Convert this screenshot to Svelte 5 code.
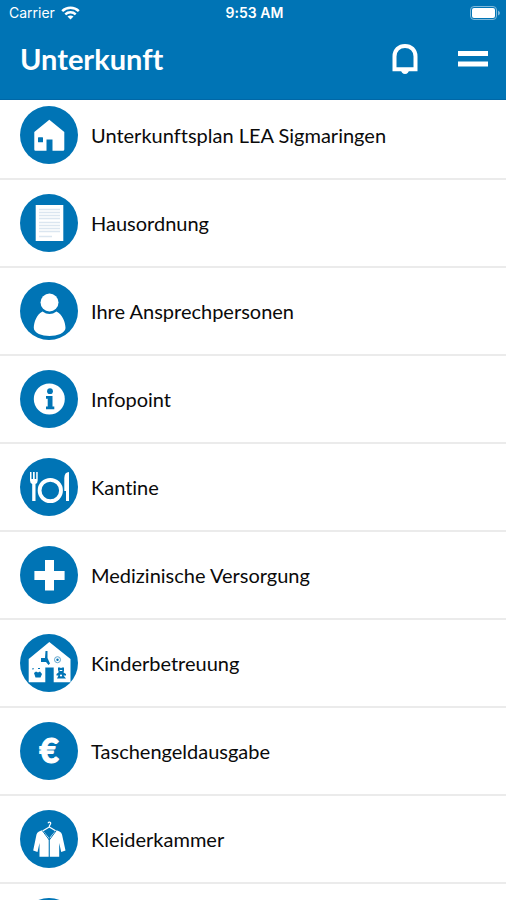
<script lang="ts">
	type Entry = { icon: string; label?: string };

	let entries: Entry[] = [
		{ icon: 'house', label: 'Unterkunftsplan LEA Sigmaringen' },
		{ icon: 'document', label: 'Hausordnung' },
		{ icon: 'person', label: 'Ihre Ansprechpersonen' },
		{ icon: 'info', label: 'Infopoint' },
		{ icon: 'canteen', label: 'Kantine' },
		{ icon: 'cross', label: 'Medizinische Versorgung' },
		{ icon: 'childcare', label: 'Kinderbetreuung' },
		{ icon: 'euro', label: 'Taschengeldausgabe' },
		{ icon: 'jacket', label: 'Kleiderkammer' },
		{ icon: 'blank' }
	];
</script>

<div class="screen">
	<header>
		<div class="status">
			<div class="carrier">
				<span>Carrier</span>
				<svg class="wifi" viewBox="0 0 19 14" aria-hidden="true">
					<path d="M1.2 5.2C5.8.7 13.200.7 17.800 5.200" />
					<path d="M4.300 8.300C7.200 5.600 11.800 5.600 14.700 8.300" />
					<path class="tip" d="M6.500 10.500C8.200 9 10.800 9 12.500 10.500L9.500 13.600Z" />
				</svg>
			</div>
			<span class="time">9:53 AM</span>
			<svg class="battery" viewBox="0 0 30 14" aria-hidden="true">
				<rect class="case" x="0.5" y="0.500" width="26" height="13" rx="3.500" />
				<rect x="2" y="2" width="23" height="10" rx="2" />
				<path class="cap" d="M28 4.500Q30 5.500 30 7Q30 8.500 28 9.500Z" />
			</svg>
		</div>
		<div class="bar">
			<h1>Unterkunft</h1>
			<button aria-label="Mitteilungen">
				<svg class="bell" viewBox="0 0 26 30" aria-hidden="true">
					<path class="outline" d="M2.500 25.300V12.500C2.500 6 7 2 13 2S23.500 6 23.500 12.500V25.300Z" />
					<path d="M8.500 25H17.500Q16.500 30 13 30T8.500 25Z" />
				</svg>
			</button>
			<button aria-label="Menü">
				<svg class="menu" viewBox="0 0 30 16" aria-hidden="true">
					<path d="M0 0H30V5H0ZM0 10.500H30V15.500H0Z" />
				</svg>
			</button>
		</div>
	</header>

	<main>
		<ul>
			{#each entries as entry}
				<li>
					<button class="entry">
						<svg class="icon" viewBox="0 0 58 58" aria-hidden="true">
							<circle class="blue" cx="29" cy="29" r="29" />
							{#if entry.icon === 'house'}
								<path d="M29.300 13.700L44.300 26V43.500Q44.300 44.700 43 44.700H32.500V33.500H26.500V44.700H15.500Q14.300 44.700 14.300 43.500V26Z" />
								<rect class="blue" x="18" y="31.300" width="5" height="5" rx="0.500" />
							{:else if entry.icon === 'document'}
								<rect x="15.700" y="11" width="27.600" height="36" />
								<path class="print" d="M19 15.500H40M19 18.500H40M19 21.500H40M19 24.500H40M19 28.500H40M19 31.500H40M19 34.500H40M19 37.500H40M19 42.500H32" />
							{:else if entry.icon === 'person'}
								<circle cx="29.500" cy="20.500" r="9" />
								<path d="M22.500 29.500Q29.500 34.500 36.500 29.500C42 32 45.500 40 45.500 46C45.500 51 37 54 29.500 54S13.800 51 13.800 46C13.800 40 17 32 22.500 29.500Z" />
							{:else if entry.icon === 'info'}
								<circle cx="29.300" cy="29" r="15.500" />
								<circle class="blue" cx="30" cy="21.200" r="2.900" />
								<path class="blue" d="M26 26H32.500V36.500H34.300V39.300H26V36.500H27.700V28.800H26Z" />
							{:else if entry.icon === 'canteen'}
								<path d="M10 14H11.500V21H13V14H14.700V21H16.200V14H17.700V22.500Q17.700 25 15.500 26V43H12.200V26Q10 25 10 22.500Z" />
								<circle class="plate" cx="30.300" cy="32.500" r="10.700" />
								<path d="M49 14V43H46V33H44.300V20Q44.500 14 49 14Z" />
							{:else if entry.icon === 'cross'}
								<path d="M25 14H34V25H44.600V34H34V44.500H25V34H14.400V25H25Z" />
							{:else if entry.icon === 'childcare'}
								<path d="M29.300 8L50.500 25V48.300H33.700V33.500H25.300V48.300H8.700V25Z" />
								<path class="blue" d="M25.500 17H27.500V24L30 29.500L28.500 31L26 28H21V24H25Z" />
								<circle class="ball" cx="37.500" cy="25.700" r="3" />
								<circle class="blue" cx="37.500" cy="25.700" r="1.200" />
								<path class="blue" d="M14 39L16 37.500L18 38.500L20 37.500L22 40L20.500 43.500H15.500ZM12 34.500L14 34L13 36ZM18 34H20V35H18Z" />
								<path class="blue" d="M38 33.500H40L41 34.200L42 33.500H44V36.500L43.500 38.500L46 40V41.500H43.500L46 44.500H37L38.500 41.500H36.500V40L38.500 38.500V36.500H38Z" />
								<circle cx="41" cy="41.500" r="1.100" />
								<path d="M39.700 36H42.300V37H39.700Z" />
							{:else if entry.icon === 'euro'}
								<text x="29" y="41" text-anchor="middle">€</text>
							{:else if entry.icon === 'jacket'}
								<path class="hook" d="M28 13.200Q29 11.300 30.500 12.500C31.500 14.500 29 14.500 29.300 17L23 20.700M29.300 17L35.600 20.700" />
								<path d="M22.500 20L28.700 27.500V46.700H19.500V33L17.500 42L13.200 40.500L16.500 24.500Q17 22.500 19 21.500ZM36 20L29.800 27.500V46.700H39.200V33L41.200 42L45.500 40.500L42 24.500Q41.500 22.500 39.500 21.500Z" />
								<path class="seam" d="M22.300 20.500L29.300 30L36.300 20.500" />
							{/if}
						</svg>
						{#if entry.label}<span>{entry.label}</span>{/if}
					</button>
				</li>
			{/each}
		</ul>
	</main>
</div>

<style>
	:global(body) {
		margin: 0;
	}

	.screen {
		display: flex;
		flex-direction: column;
		height: 100vh;
		background: #fff;
		font-family: Lato, sans-serif;
		font-variant-ligatures: none;
		color: #0a0a0a;
	}

	header {
		flex: none;
		background: #0074b5;
		border-bottom: 1px solid #0067a6;
		color: #fff;
	}

	.status {
		display: grid;
		grid-template-columns: 1fr auto 1fr;
		align-items: center;
		height: 26px;
		padding: 0 6px 0 9px;
		font-family: Inter, sans-serif;
		font-size: 14px;
		line-height: 26px;
	}

	.carrier {
		display: flex;
		align-items: center;
		gap: 6px;
	}

	.time {
		font-weight: 600;
	}

	svg {
		display: block;
		flex: none;
		fill: #fff;
	}

	.wifi {
		width: 19px;
		height: 14px;
		stroke: #fff;
		stroke-width: 2.5;
		fill: none;
	}

	.wifi .tip {
		fill: #fff;
		stroke: none;
	}

	.battery {
		width: 30px;
		height: 14px;
		justify-self: end;
	}

	.battery .case {
		fill: none;
		stroke: #7fb9da;
	}

	.battery .cap {
		fill: #7fb9da;
	}

	.bar {
		display: flex;
		align-items: center;
		padding: 15px 18px 22px 20px;
	}

	h1 {
		flex: 1;
		margin: 0;
		font-size: 29px;
		line-height: 36px;
		font-weight: 700;
	}

	button {
		padding: 0;
		border: none;
		background: none;
		color: inherit;
		font: inherit;
		cursor: pointer;
	}

	.bar button + button {
		margin-left: 40px;
	}

	.bell {
		width: 26px;
		height: 30px;
	}

	.bell .outline {
		fill: none;
		stroke: #fff;
		stroke-width: 4;
	}

	.menu {
		width: 30px;
		height: 16px;
	}

	main {
		flex: 1;
		min-height: 0;
		overflow-y: auto;
		scrollbar-width: none;
	}

	ul {
		margin: 0;
		padding: 0;
		list-style: none;
	}

	li {
		border-bottom: 2px solid #ebebeb;
	}

	.entry {
		display: flex;
		align-items: center;
		gap: 13px;
		width: 100%;
		padding: 14px 20px;
		font-size: 20px;
		line-height: 24px;
		text-align: left;
	}

	li:first-child .entry {
		padding-top: 6px;
	}

	.icon {
		width: 58px;
		height: 58px;
	}

	.blue {
		fill: #0074b5;
	}

	.print {
		stroke: #dbe6f0;
		stroke-width: 1.5;
	}

	.plate {
		fill: none;
		stroke: #fff;
		stroke-width: 3.8;
	}

	.ball {
		fill: none;
		stroke: #5fa3cc;
	}

	.icon text {
		font-size: 34px;
		font-weight: 900;
		stroke: #fff;
		stroke-width: 1;
	}

	.hook {
		fill: none;
		stroke: #fff;
		stroke-width: 1.3;
	}

	.seam {
		fill: none;
		stroke: #0074b5;
		stroke-width: 1;
	}
</style>
